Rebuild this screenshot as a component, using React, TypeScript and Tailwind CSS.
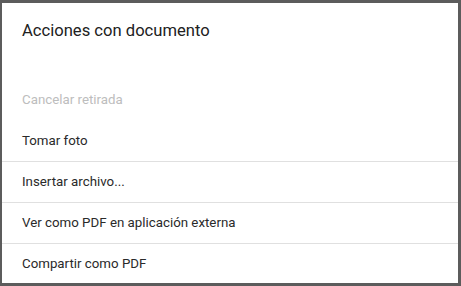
const items = [
  { label: "Cancelar retirada", disabled: true },
  { label: "Tomar foto" },
  { label: "Insertar archivo..." },
  { label: "Ver como PDF en aplicación externa" },
  { label: "Compartir como PDF" },
];

export default function App() {
  return (
    <div
      className="w-[461px] h-[286px] bg-[#5c5c5c] pt-[3px] pl-[2px] pr-[3px] pb-[3px]"
      style={{ fontFamily: "Roboto, 'Liberation Sans', sans-serif" }}
    >
      <div className="h-full bg-white flex flex-col overflow-hidden">
        <div className="h-[76px] shrink-0 pl-5 pt-[18px]">
          <h2 className="text-[16.6px] leading-[20px] text-[#212121]">
            Acciones con documento
          </h2>
        </div>
        {items.map((item, i) => (
          <div
            key={i}
            className={`h-[41px] shrink-0 flex items-center pl-5 text-[13.3px] ${
              i > 1 ? "border-t border-[#e0e0e0]" : ""
            } ${item.disabled ? "text-[#bdbdbd]" : "text-[#2a2a2a]"}`}
          >
            {item.label}
          </div>
        ))}
      </div>
    </div>
  );
}
